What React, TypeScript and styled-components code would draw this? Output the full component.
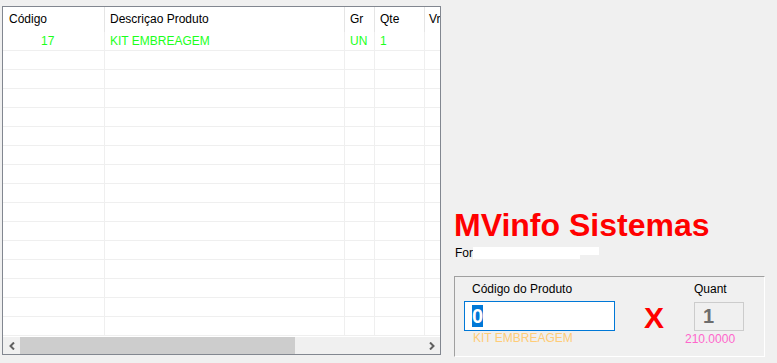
import React from "react";
import styled, { createGlobalStyle } from "styled-components";

const Global = createGlobalStyle`
  html, body { margin: 0; padding: 0; background: #f0f0f0; }
  body { font-family: "Liberation Sans", Arial, sans-serif; font-size: 12px; color: #000; }
`;

const Page = styled.div`
  display: flex;
  width: 777px;
  height: 363px;
  overflow: hidden;
  background: #f0f0f0;
`;

const Grid = styled.div`
  margin: 6px 0 0 2px;
  width: 439px;
  height: 349px;
  box-sizing: border-box;
  border: 1px solid #828790;
  background: #fff;
  display: flex;
  flex-direction: column;
  overflow: hidden;
`;

const HeaderRow = styled.div`
  display: flex;
  height: 25px;
  flex: none;
`;

const HeadCell = styled.div<{ $w: number; $pad?: number }>`
  width: ${(p) => p.$w}px;
  flex: none;
  box-sizing: border-box;
  padding-left: ${(p) => p.$pad ?? 5}px;
  line-height: 25px;
  border-right: 1px solid #e5e5e5;
  white-space: nowrap;
  overflow: hidden;
`;

const Body = styled.div`
  flex: 1;
  overflow: hidden;
`;

const Row = styled.div`
  display: flex;
  height: 19px;
  box-sizing: border-box;
  border-bottom: 1px solid #efefef;
`;

const Cell = styled.div<{ $w: number; $pad?: number }>`
  width: ${(p) => p.$w}px;
  flex: none;
  box-sizing: border-box;
  padding: 1px 0 0 ${(p) => p.$pad ?? 5}px;
  line-height: 17px;
  border-right: 1px solid #efefef;
  color: #1cff1c;
  white-space: nowrap;
  overflow: hidden;
`;

const HScroll = styled.div`
  flex: none;
  height: 17px;
  display: flex;
  background: #f0f0f0;
`;

const ArrowBtn = styled.div`
  width: 17px;
  flex: none;
  display: flex;
  align-items: center;
  justify-content: center;
`;

const Track = styled.div`
  flex: 1;
  display: flex;
`;

const Thumb = styled.div<{ $w: number }>`
  width: ${(p) => p.$w}px;
  background: #cdcdcd;
`;

const Side = styled.div`
  flex: 1;
  padding: 209px 0 0 13px;
  display: flex;
  flex-direction: column;
  align-items: flex-start;
`;

const Title = styled.div`
  font-size: 32px;
  font-weight: bold;
  line-height: 32px;
  color: #ff0000;
  white-space: nowrap;
`;

const ForLine = styled.div`
  margin: 5px 0 0 1px;
  display: flex;
  align-items: flex-start;
  line-height: 14px;
`;

const Redact = styled.div`
  margin-top: 1px;
  display: flex;
  flex-direction: column;
`;

const RedactBar = styled.div<{ $w: number; $h: number }>`
  width: ${(p) => p.$w}px;
  height: ${(p) => p.$h}px;
  background: #fff;
`;

const Group = styled.div`
  margin: 16px 0 0 0;
  width: 311px;
  height: 81px;
  box-sizing: border-box;
  border-top: 1px solid #a0a0a0;
  border-left: 1px solid #a0a0a0;
  border-right: 1px solid #fff;
  border-bottom: 1px solid #fff;
  padding: 5px 0 0 9px;
  display: flex;
  align-items: flex-start;
`;

const Field = styled.div<{ $w: number }>`
  width: ${(p) => p.$w}px;
  flex: none;
  display: flex;
  flex-direction: column;
`;

const Label = styled.div<{ $ml?: number }>`
  margin-left: ${(p) => p.$ml ?? 0}px;
  line-height: 14px;
  white-space: nowrap;
`;

const Input = styled.div`
  margin-top: 5px;
  height: 30px;
  box-sizing: border-box;
  border: 1px solid #0078d7;
  background: #fff;
  display: flex;
  align-items: center;
  padding-left: 7px;
`;

const Selected = styled.span`
  background: #0078d7;
  color: #fff;
  font-size: 20px;
  font-weight: bold;
  line-height: 22px;
`;

const Hint = styled.div<{ $color: string; $ml: number }>`
  margin-left: ${(p) => p.$ml}px;
  line-height: 14px;
  color: ${(p) => p.$color};
  white-space: nowrap;
`;

const Times = styled.div`
  margin: 21px 0 0 29px;
  font-size: 30px;
  font-weight: bold;
  line-height: 30px;
  color: #ff0000;
  flex: none;
`;

const QtyField = styled(Field)`
  margin-left: 30px;
`;

const QtyBox = styled.div`
  margin-top: 6px;
  height: 29px;
  box-sizing: border-box;
  border: 1px solid #cccccc;
  background: #f0f0f0;
  display: flex;
  align-items: center;
  padding-left: 8px;
  font-size: 20px;
  font-weight: bold;
  color: #6d6d6d;
  margin-bottom: 1px;
`;

const Chevron = ({ dir }: { dir: "left" | "right" }) => (
  <svg width="6" height="8" viewBox="0 0 6 8">
    <polyline
      points={dir === "left" ? "5,0.5 1.5,4 5,7.5" : "1,0.5 4.5,4 1,7.5"}
      fill="none"
      stroke="#606060"
      strokeWidth="2"
    />
  </svg>
);

const cols = [
  { w: 102, head: "Código", pad: 7, bodyPad: 38 },
  { w: 240, head: "Descriçao Produto" },
  { w: 30, head: "Gr" },
  { w: 50, head: "Qte" },
  { w: 40, head: "Vr" },
];

const data = [["17", "KIT EMBREAGEM", "UN", "1", ""]];

export default function App() {
  const rows = Array.from({ length: 16 }, (_, i) => data[i] ?? ["", "", "", "", ""]);
  return (
    <>
      <Global />
      <Page>
        <Grid>
          <HeaderRow>
            {cols.map((c) => (
              <HeadCell key={c.head} $w={c.w} $pad={c.pad ? 6 : c.head === "Vr" ? 4 : 5}>
                {c.head}
              </HeadCell>
            ))}
          </HeaderRow>
          <Body>
            {rows.map((r, i) => (
              <Row key={i}>
                {cols.map((c, j) => (
                  <Cell key={j} $w={c.w} $pad={c.bodyPad}>
                    {r[j]}
                  </Cell>
                ))}
              </Row>
            ))}
          </Body>
          <HScroll>
            <ArrowBtn>
              <Chevron dir="left" />
            </ArrowBtn>
            <Track>
              <Thumb $w={275} />
            </Track>
            <ArrowBtn>
              <Chevron dir="right" />
            </ArrowBtn>
          </HScroll>
        </Grid>
        <Side>
          <Title>MVinfo Sistemas</Title>
          <ForLine>
            For
            <Redact>
              <RedactBar $w={126} $h={8} />
              <RedactBar $w={107} $h={4} />
            </Redact>
          </ForLine>
          <Group>
            <Field $w={151}>
              <Label $ml={8}>Código do Produto</Label>
              <Input>
                <Selected>0</Selected>
              </Input>
              <Hint $color="#ffcc77" $ml={9}>KIT EMBREAGEM</Hint>
            </Field>
            <Times>X</Times>
            <QtyField $w={50}>
              <Label>Quant</Label>
              <QtyBox>1</QtyBox>
              <Hint $color="#ff66cc" $ml={-9}>210.0000</Hint>
            </QtyField>
          </Group>
        </Side>
      </Page>
    </>
  );
}
